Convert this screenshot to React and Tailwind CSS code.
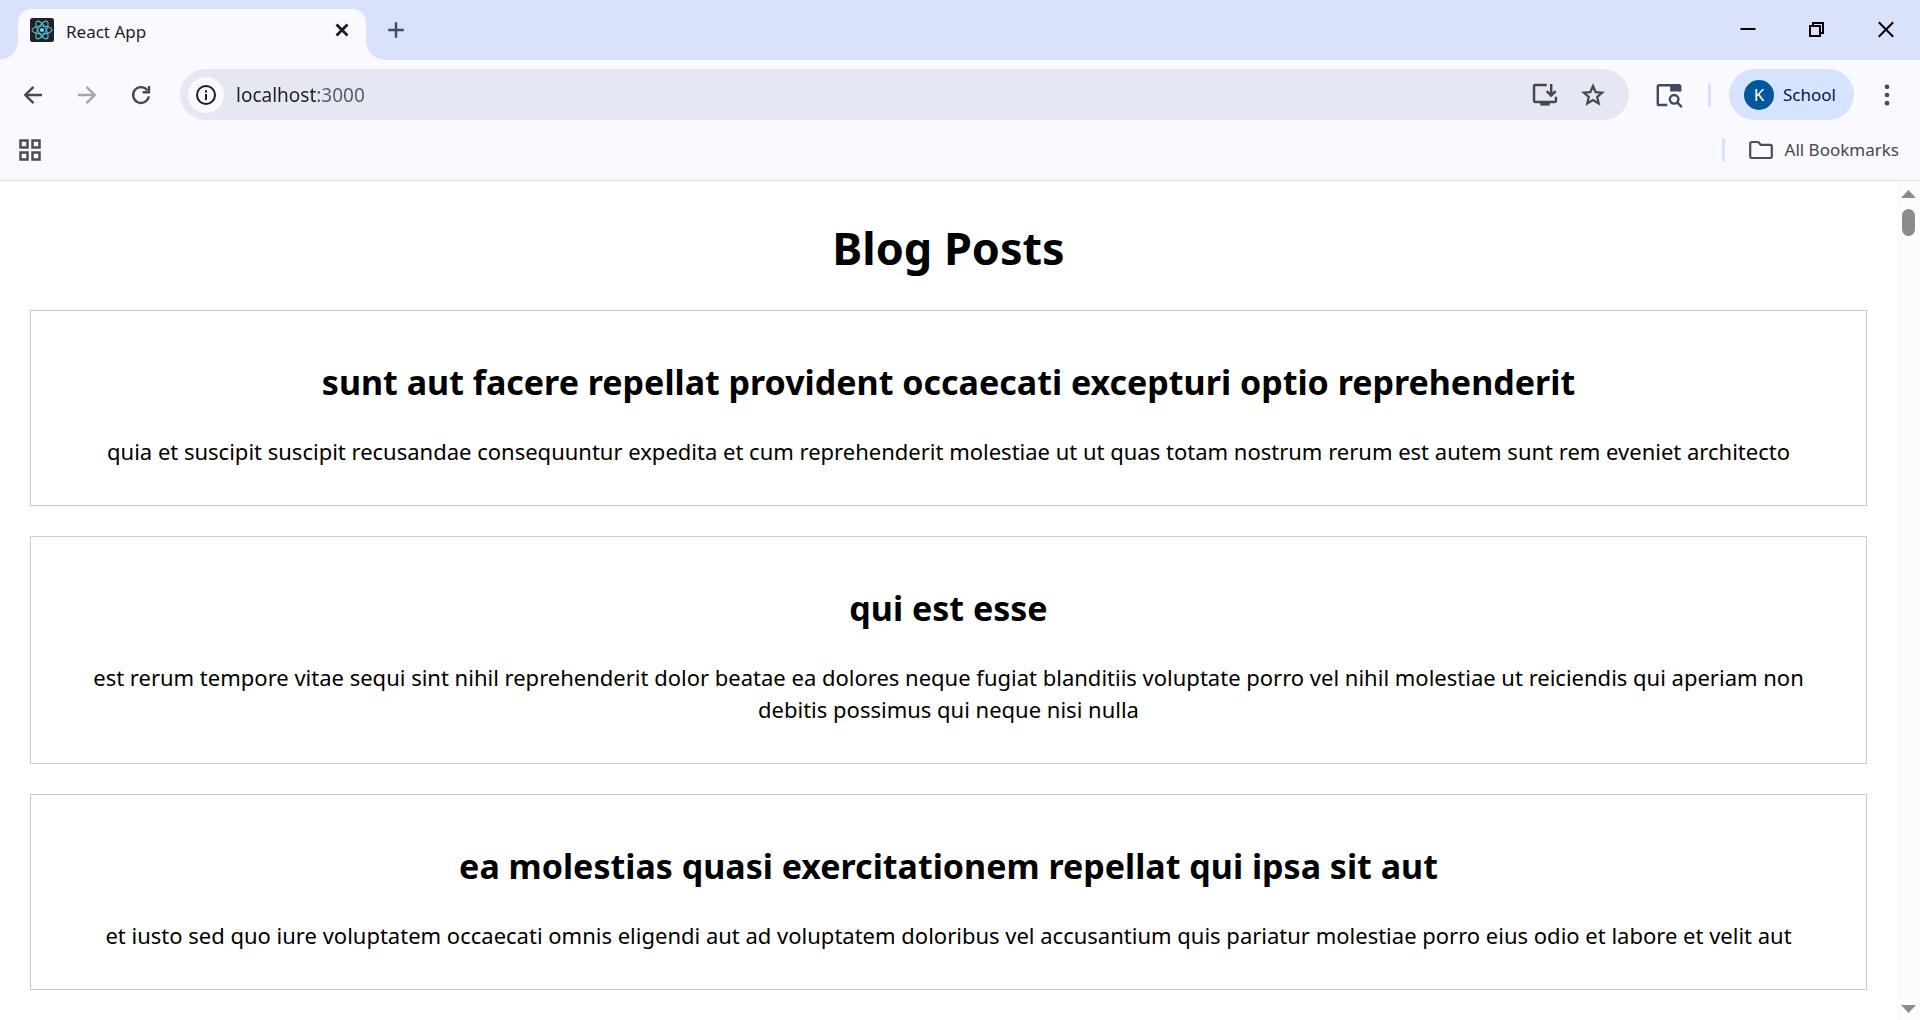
const posts = [
  {
    id: 1,
    title: "sunt aut facere repellat provident occaecati excepturi optio reprehenderit",
    body: "quia et suscipit suscipit recusandae consequuntur expedita et cum reprehenderit molestiae ut ut quas totam nostrum rerum est autem sunt rem eveniet architecto",
  },
  {
    id: 2,
    title: "qui est esse",
    body: "est rerum tempore vitae sequi sint nihil reprehenderit dolor beatae ea dolores neque fugiat blanditiis voluptate porro vel nihil molestiae ut reiciendis qui aperiam non debitis possimus qui neque nisi nulla",
  },
  {
    id: 3,
    title: "ea molestias quasi exercitationem repellat qui ipsa sit aut",
    body: "et iusto sed quo iure voluptatem occaecati omnis eligendi aut ad voluptatem doloribus vel accusantium quis pariatur molestiae porro eius odio et labore et velit aut",
  },
];

function ReactLogo() {
  return (
    <svg className="size-6 shrink-0" viewBox="0 0 24 24" fill="none" aria-hidden="true">
      <rect width="24" height="24" rx="2.5" fill="#222" />
      <g stroke="#53c1de" strokeWidth="1.1">
        <ellipse cx="12" cy="12" rx="10" ry="4" />
        <ellipse cx="12" cy="12" rx="10" ry="4" transform="rotate(60 12 12)" />
        <ellipse cx="12" cy="12" rx="10" ry="4" transform="rotate(120 12 12)" />
      </g>
      <circle cx="12" cy="12" r="2.1" fill="#61dafb" />
    </svg>
  );
}

function Icon({ children, size = "size-6", color = "text-[#424a5d]", width = 2.4 }) {
  return (
    <svg className={`${size} ${color} shrink-0`} viewBox="0 0 24 24" fill="none" stroke="currentColor" strokeWidth={width} aria-hidden="true">
      {children}
    </svg>
  );
}

function IconButton({ label, className = "size-9", children }) {
  return (
    <button type="button" aria-label={label} className={`${className} flex shrink-0 items-center justify-center rounded-full`}>
      {children}
    </button>
  );
}

function TabStrip() {
  return (
    <header className="flex h-[60px] shrink-0 items-end bg-[#dae1fa]">
      <span className="size-[18px] bg-[radial-gradient(circle_at_0_0,transparent_17px,#faf9ff_18px)]" />
      <div className="flex h-[51px] w-[348px] items-center rounded-t-[14px] bg-[#faf9ff] pr-1.5 pb-[9px] pl-3">
        <ReactLogo />
        <span className="ml-3 flex-1 pt-1 text-[17px] leading-6 text-[#1f1f1f]">React App</span>
        <IconButton label="Close tab">
          <Icon color="text-[#1b1b1f]" width={2.8}>
            <path d="M6.5 6.5 17.5 17.5M17.5 6.5 6.5 17.5" />
          </Icon>
        </IconButton>
      </div>
      <span className="size-[18px] bg-[radial-gradient(circle_at_100%_0,transparent_17px,#faf9ff_18px)]" />
      <div className="flex h-full flex-1 items-center justify-between">
        <IconButton label="New tab" className="h-9 w-6">
          <Icon>
            <path d="M12 4.2V19.8M4.2 12H19.8" />
          </Icon>
        </IconButton>
        <div className="flex">
          <IconButton label="Minimize" className="h-[60px] w-[69px]">
            <Icon color="text-black" width={2}>
              <path d="M4.5 11H19.5" />
            </Icon>
          </IconButton>
          <IconButton label="Restore" className="h-[60px] w-[69px]">
            <Icon color="text-black" width={2}>
              <path d="M5 8H15V18H5ZM8 8V5H18V15H15" />
            </Icon>
          </IconButton>
          <IconButton label="Close" className="h-[60px] w-[69px]">
            <Icon color="text-black" width={2}>
              <path d="M4.8 4.3 19.2 18.7M19.2 4.3 4.8 18.7" />
            </Icon>
          </IconButton>
        </div>
      </div>
    </header>
  );
}

function Toolbar() {
  return (
    <div className="flex h-[69px] items-center px-[15px]">
      <nav className="flex gap-[18px]" aria-label="History">
        <IconButton label="Back">
          <Icon>
            <path d="M21 12H5M12.5 3.8 4.3 12 12.5 20.2" />
          </Icon>
        </IconButton>
        <IconButton label="Forward">
          <Icon color="text-[#a4a5ad]">
            <path d="M3 12H19M11.5 3.8 19.7 12 11.5 20.2" />
          </Icon>
        </IconButton>
        <IconButton label="Reload">
          <Icon>
            <path d="M18.4 7.4A7.9 7.9 0 1 0 19.8 13.4M20 3V9.2H13.6" />
          </Icon>
        </IconButton>
      </nav>

      <div className="ml-[21px] flex h-[51px] flex-1 items-center rounded-full bg-[#e5e8f3] pr-[18px] pl-2">
        <IconButton label="View site information" className="size-9 bg-[#faf9ff]">
          <Icon color="text-[#1b1b1f]" width={2}>
            <circle cx="12" cy="12" r="9" />
            <path d="M12 11V17M12 7.2V9.4" />
          </Icon>
        </IconButton>
        <input
          aria-label="Address and search bar"
          defaultValue="localhost:3000"
          className="ml-3 min-w-0 flex-1 bg-[linear-gradient(to_right,#1f1f1f_81px,#565a64_81px)] bg-clip-text text-[19px] leading-7 text-transparent outline-none"
        />
        <div className="flex gap-3">
          <IconButton label="Install app">
            <Icon size="size-7" color="text-[#47474b]" width={2.1}>
              <path d="M13.5 3.5H3.6Q2.6 3.5 2.6 4.5V17Q2.6 18 3.6 18H20.4Q21.4 18 21.4 17V13.6" />
              <path d="M17.3 2.5V12M13.4 8.6 17.3 12.4 21.2 8.6" />
              <path d="M8 19.6H16" strokeWidth="3" />
            </Icon>
          </IconButton>
          <IconButton label="Bookmark this tab">
            <Icon size="size-7" color="text-[#47474b]" width={1.9}>
              <path d="M12 4.3 14.3 9.5 19.9 10 15.6 13.7 16.9 19.2 12 16.3 7.1 19.2 8.4 13.7 4.1 10 9.7 9.5Z" />
            </Icon>
          </IconButton>
        </div>
      </div>

      <IconButton label="Search this page" className="ml-[22px] size-9">
        <Icon size="size-7" width={2.1}>
          <path d="M10.5 20.6H3.6Q2.4 20.6 2.4 19.4V4.8Q2.4 3.6 3.6 3.6H20.4Q21.6 3.6 21.6 4.8V9" />
          <path d="M13 3.6H21.6V9H13Z" fill="currentColor" stroke="none" />
          <circle cx="16.4" cy="15.7" r="3.7" />
          <path d="M19 18.3 23 22.3" />
        </Icon>
      </IconButton>
      <span className="ml-[21px] h-6 w-[3px] rounded-full bg-[#d5e3ff]" />
      <button type="button" className="ml-[18px] flex h-[51px] items-center rounded-full bg-[#d6e3ff] pr-[18px] pl-[15px] text-[17px] leading-6 text-[#001b3d]">
        <span className="mr-[9px] flex size-[30px] items-center justify-center rounded-full bg-[#00579e] text-white">K</span>
        School
      </button>
      <IconButton label="Customize and control" className="ml-[15px] size-9">
        <Icon size="size-7">
          <g fill="currentColor" stroke="none">
            <circle cx="12" cy="5" r="2" />
            <circle cx="12" cy="12" r="2" />
            <circle cx="12" cy="19" r="2" />
          </g>
        </Icon>
      </IconButton>
    </div>
  );
}

function BookmarksBar() {
  return (
    <div className="flex h-[51px] items-center justify-between pr-[21px] pb-[9px] pl-[18px]">
      <IconButton label="Apps" className="size-6">
        <Icon color="text-[#4d4d52]" width={2.5}>
          <path d="M2.5 2.5H9.5V9.5H2.5ZM14.5 2.5H21.5V9.5H14.5ZM2.5 14.5H9.5V21.5H2.5ZM14.5 14.5H21.5V21.5H14.5Z" />
        </Icon>
      </IconButton>
      <div className="flex items-center">
        <span className="mr-6 h-6 w-[3px] rounded-full bg-[#d5e3ff]" />
        <button type="button" className="flex items-center gap-3 text-[17px] leading-6 text-[#47474b]">
          <Icon color="text-[#4d4d52]" width={2.2}>
            <path d="M3 4H9.2L11.8 6.8H21.2Q22.8 6.8 22.8 8.2V18.6Q22.8 20 21.2 20H2.8Q1.2 20 1.2 18.6V5.6Q1.2 4 3 4Z" />
          </Icon>
          All Bookmarks
        </button>
      </div>
    </div>
  );
}

function Scrollbar() {
  return (
    <div className="flex w-[23px] shrink-0 flex-col items-center justify-between bg-[#fcfcfc] pt-[9px] pb-[7px]" aria-hidden="true">
      <div className="flex flex-col items-center gap-[11px]">
        <svg className="h-2 w-[15px] text-[#8b8b8b]" viewBox="0 0 15 8" fill="currentColor">
          <path d="M7.5 0 15 8H0Z" />
        </svg>
        <span className="h-[27px] w-[13px] rounded-full bg-[#8b8b8b]" />
      </div>
      <svg className="h-2 w-[15px] text-[#8b8b8b]" viewBox="0 0 15 8" fill="currentColor">
        <path d="M7.5 8 0 0H15Z" />
      </svg>
    </div>
  );
}

function Post({ title, body }) {
  return (
    <article className="border border-[#ccc] px-[30px] pt-[47px] pb-[38px]">
      <h2 className="text-[34px] leading-[48px] font-bold">{title}</h2>
      <p className="mt-[29px] text-[22px] leading-8">{body}</p>
    </article>
  );
}

export default function App() {
  return (
    <div className="flex h-screen flex-col overflow-hidden bg-white font-['Noto_Sans','Open_Sans',sans-serif] text-black">
      <TabStrip />
      <div className="shrink-0 border-b border-[#dcdfec] bg-[#faf9ff]">
        <Toolbar />
        <BookmarksBar />
      </div>
      <div className="flex min-h-0 flex-1">
        <main className="min-w-0 flex-1 overflow-hidden px-[30px] text-center">
          <h1 className="mt-[35px] mb-[30px] text-[45px] leading-[64px] font-bold">Blog Posts</h1>
          <div className="flex flex-col gap-[30px]">
            {posts.map((post) => (
              <Post key={post.id} title={post.title} body={post.body} />
            ))}
          </div>
        </main>
        <Scrollbar />
      </div>
    </div>
  );
}
